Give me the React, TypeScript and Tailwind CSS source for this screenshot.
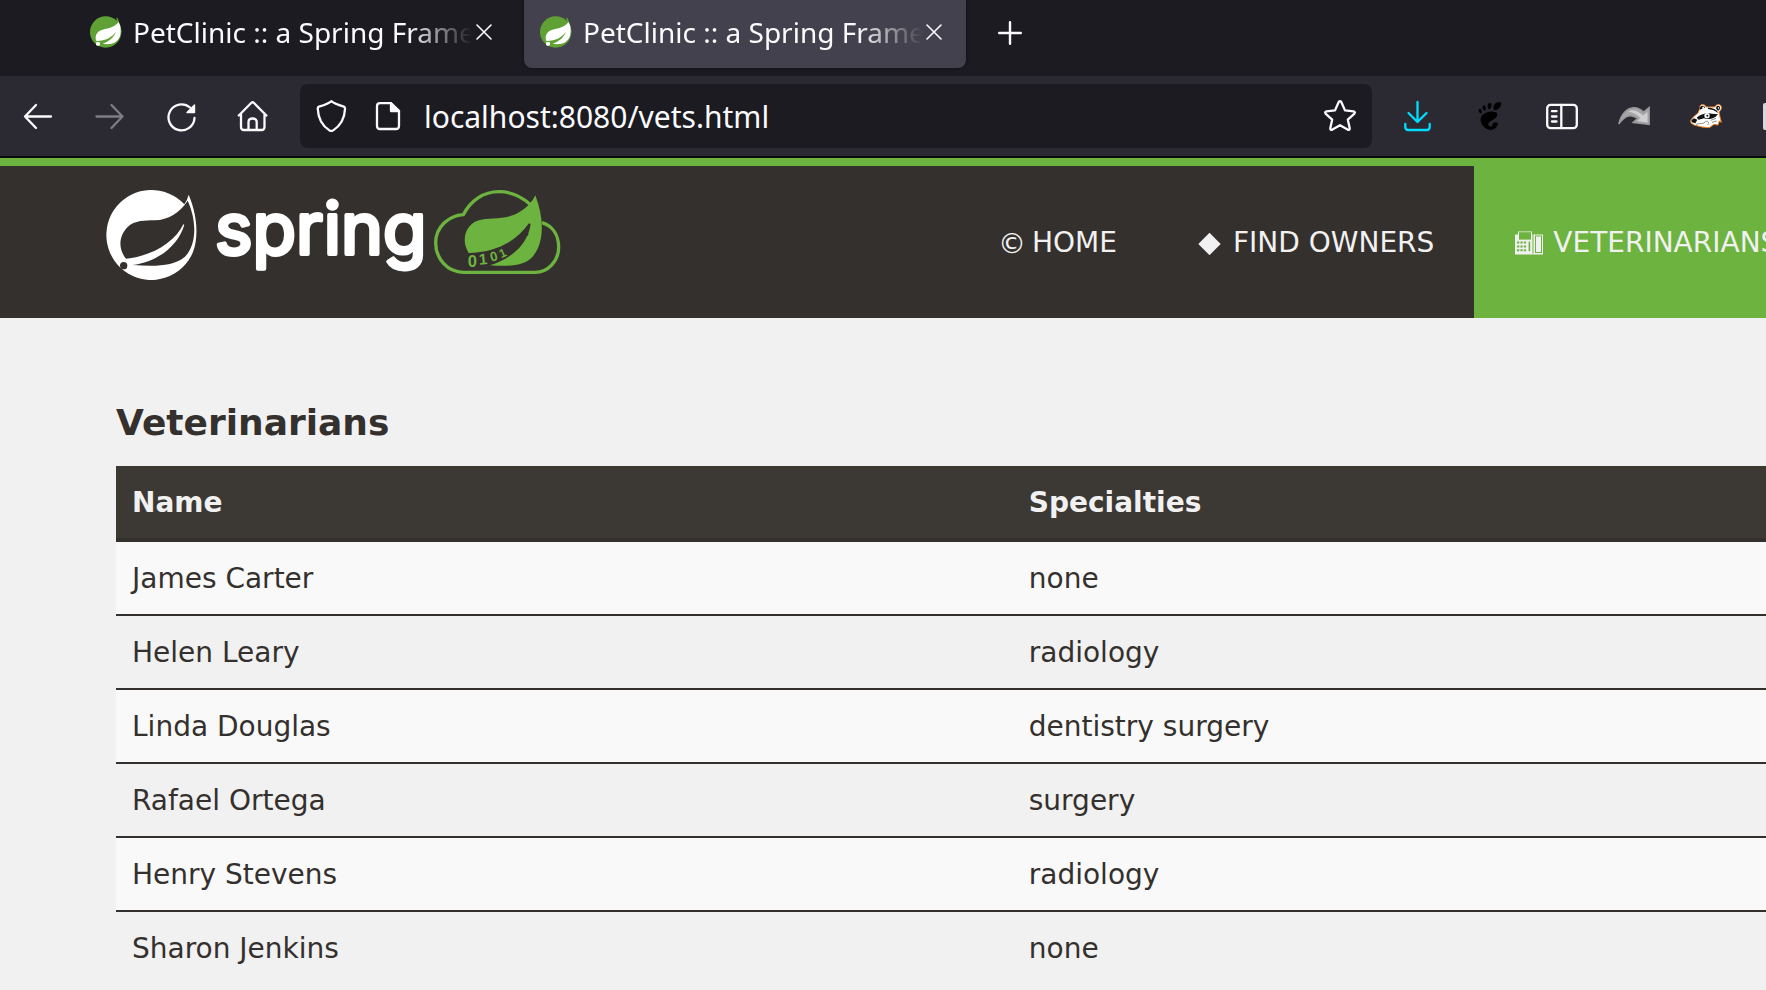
import type { ReactNode } from 'react';
import { SiGnome } from 'react-icons/si';

function SpringFavicon() {
  return (
    <svg viewBox="0 0 96 96" className="size-8 shrink-0" aria-hidden="true">
      <circle cx="47" cy="48" r="47" fill="#5fa134" />
      <path d="M80 4 Q86 8 86 16 Q94 30 95 50 L78 40 Z" fill="#5fa134" />
      <path
        d="M86 18 C70 40 42 36 27 46 C15 55 16 68 19 75 C48 74 66 64 78 47 C70 68 52 78 38 83 C62 88 86 80 91 56 C94 40 91 28 86 18 Z"
        fill="#fff"
      />
      <rect x="18" y="78" width="12" height="11" rx="4" fill="#fff" />
    </svg>
  );
}

function Line({ children, className }: { children: ReactNode; className: string }) {
  return (
    <svg
      viewBox="0 0 32 32"
      fill="none"
      stroke="currentColor"
      strokeWidth="2.3"
      strokeLinecap="round"
      strokeLinejoin="round"
      className={className}
      aria-hidden="true"
    >
      {children}
    </svg>
  );
}

function Tab({ active, title }: { active?: boolean; title: string }) {
  return (
    <div
      className={
        active
          ? 'flex h-[68px] w-[442px] shrink-0 items-center rounded-b-lg bg-[#42414d] pr-6 pl-4 pb-1 shadow-[0_0_4px_rgba(0,0,0,0.5)]'
          : 'flex h-[68px] w-[442px] shrink-0 items-center pr-6 pl-4 pb-1'
      }
    >
      <SpringFavicon />
      <button
        type="button"
        className="ml-[11px] min-w-0 flex-1 overflow-hidden text-left text-[28px] leading-[40px] whitespace-nowrap [mask-image:linear-gradient(to_right,#000_calc(100%-64px),transparent)]"
      >
        {title}
      </button>
      <button type="button" aria-label="Close tab" className="ml-1 size-4">
        <svg viewBox="0 0 16 16" className="size-4" stroke="#fbfbfe" strokeWidth="1.6" strokeLinecap="round">
          <path d="M1 1 L15 15 M15 1 L1 15" />
        </svg>
      </button>
    </div>
  );
}

function ToolButton({ label, children }: { label: string; children: ReactNode }) {
  return (
    <button type="button" aria-label={label} className="block size-8 shrink-0">
      {children}
    </button>
  );
}

function Badger() {
  return (
    <svg viewBox="0 0 96 78" className="size-8" aria-hidden="true">
      <path
        d="M2 52 L10 42 L24 30 L30 16 C28 6 36 2 43 6 L50 12 L74 12 C80 2 92 2 94 12 C95 20 90 24 87 27 L90 42 L94 58 L88 54 L84 66 L72 64 L58 74 L36 72 L12 66 L3 60 Z"
        fill="#fff"
        stroke="#ee8122"
        strokeWidth="3"
        strokeLinejoin="round"
      />
      <path d="M30 20 C28 8 40 4 46 14 L38 16 Z M78 16 C80 4 92 8 90 18 L84 24 Z" fill="#111" />
      <path d="M36 16 C38 9 42 10 43 14 Z M83 16 C85 9 89 12 87 18 Z" fill="#fff" />
      <path d="M54 14 C66 14 82 18 84 30 C74 22 64 19 54 18 Z" fill="#111" />
      <path d="M4 52 L12 46 L22 50 L16 61 L6 58 Z M20 44 C32 32 52 28 66 32 L84 34 L76 42 C68 48 50 50 42 46 L26 50 Z" fill="#111" />
      <circle cx="51" cy="38" r="8" fill="#fff" />
      <circle cx="52" cy="38" r="3" fill="#111" />
      <path d="M18 64 C30 60 40 64 46 56 C54 52 60 60 52 66 M62 52 L78 46 M66 58 L80 54" fill="none" stroke="#777" strokeWidth="2.5" />
    </svg>
  );
}

function BrowserChrome() {
  return (
    <header className="text-[#fbfbfe] [font-family:'Noto_Sans','Open_Sans',sans-serif]">
      <div className="flex h-[76px] gap-2 bg-[#1c1b22] pl-[74px]">
        <Tab title="PetClinic :: a Spring Frame" />
        <Tab active title="PetClinic :: a Spring Frame" />
        <button type="button" aria-label="New tab" className="ml-5 flex h-[66px] w-8 shrink-0 items-center justify-center">
          <svg viewBox="0 0 24 24" className="size-6" stroke="currentColor" strokeWidth="2.4" strokeLinecap="round">
            <path d="M12 1.2 V22.8 M1.2 12 H22.8" />
          </svg>
        </button>
      </div>

      <div className="flex h-[82px] items-center border-b-2 border-[#0c0c0d] bg-[#2b2a33] pl-[21px]">
        <div className="flex gap-10">
          <ToolButton label="Back">
            <Line className="size-8">
              <path d="M4 16.5 H30 M15 5 L4 16.5 L15 28" />
            </Line>
          </ToolButton>
          <ToolButton label="Forward">
            <Line className="size-8 text-[#7d7c83]">
              <path d="M3.5 16.5 H29.5 M18.5 5 L29.5 16.5 L18.5 28" />
            </Line>
          </ToolButton>
          <ToolButton label="Reload">
            <Line className="size-8">
              <path d="M29.5 18 A13 13 0 1 1 25 7.5" />
              <path d="M29.5 5 V12.5 H22 Z" fill="currentColor" strokeWidth="1.4" />
            </Line>
          </ToolButton>
          <ToolButton label="Home">
            <Line className="size-8">
              <path d="M1.8 15.5 L14.4 2.8 Q15.6 1.8 16.8 2.8 L29.4 15.5 M4 13.5 V27 Q4 30 7 30 H24.5 Q27.5 30 27.5 27 V13.5 M11.5 30 V22 Q11.5 18.5 15.6 18.5 Q19.7 18.5 19.7 22 V30" />
            </Line>
          </ToolButton>
        </div>

        <div className="ml-[31px] flex h-16 min-w-0 flex-1 items-center rounded-lg bg-[#1c1b22] px-4">
          <div className="flex gap-6">
            <ToolButton label="Tracking protection">
              <Line className="size-8">
                <path d="M15.3 1.2 Q13 3.5 3 6.7 Q1.6 7.2 1.8 9 C2.2 19 6 25.5 13.4 30.4 Q15.3 31.6 17.2 30.4 C24.6 25.5 28.6 19 29 9 Q29.2 7.2 27.8 6.7 Q18 3.5 15.3 1.2 Z" />
              </Line>
            </ToolButton>
            <ToolButton label="Site information">
              <Line className="size-8">
                <path d="M19 3.2 H8 Q5 3.2 5 6.2 V26 Q5 29 8 29 H24 Q27 29 27 26 V11 L19 3.2 Z" />
                <path d="M19 3.2 V11 H27 Z" fill="currentColor" />
              </Line>
            </ToolButton>
          </div>
          <input
            type="text"
            aria-label="Address"
            defaultValue="localhost:8080/vets.html"
            className="ml-5 min-w-0 flex-1 bg-transparent pt-0.5 text-[30px] leading-[40px] outline-none"
          />
          <ToolButton label="Bookmark this page">
            <Line className="size-8">
              <path d="M14.6 2.2 Q16 0.2 17.4 2.2 L21 10.4 L29.6 11.4 Q31.8 11.9 30.2 13.8 L23.8 19.6 L25.7 28.2 Q25.9 30.7 23.6 29.6 L16 25.2 L8.4 29.6 Q6.1 30.7 6.3 28.2 L8.2 19.6 L1.8 13.8 Q0.2 11.9 2.4 11.4 L11 10.4 Z" />
            </Line>
          </ToolButton>
        </div>

        <div className="flex w-[394px] shrink-0 gap-10 overflow-hidden pl-[30px]">
          <ToolButton label="Downloads">
            <Line className="size-8 text-[#00ddff]">
              <path d="M15.5 2 V22 M6.5 13 L15.5 22 L24.5 13 M3.3 24 V27 Q3.3 30 6.3 30 H24.7 Q27.7 30 27.7 27 V24" />
            </Line>
          </ToolButton>
          <ToolButton label="GNOME Shell integration">
            <SiGnome className="mx-auto size-7 text-black" />
          </ToolButton>
          <ToolButton label="Sidebars">
            <Line className="size-8">
              <rect x="1.2" y="4.8" width="29.6" height="23.4" rx="3.5" />
              <path d="M15.3 5 V28 M6 11.2 H10.5 M6 16.5 H10.5 M6 21.5 H10.5" />
            </Line>
          </ToolButton>
          <ToolButton label="Redirect">
            <svg viewBox="0 0 32 32" className="size-8" aria-hidden="true">
              <path
                d="M0.8 24 C3 14 9 8 15.5 7.7 C20 7.5 23 9.5 25.5 12 L31.2 7.5 V24.5 L15 22.5 L19.5 18.5 C12 12.5 6 17 0.8 24 Z"
                fill="#a6a6a8"
                stroke="#98989b"
                strokeWidth="1.4"
              />
              <path d="M10 11.5 C16 8 21 12 25 15.5 L29.5 12 V22.5 L19 21 L22.5 18 C18 14 15 12 10 11.5 Z" fill="#cfcfd1" />
            </svg>
          </ToolButton>
          <ToolButton label="Privacy Badger">
            <Badger />
          </ToolButton>
          <ToolButton label="Extension">
            <svg viewBox="0 0 32 32" className="size-8" aria-hidden="true">
              <rect x="1" y="3" width="29" height="27" rx="2" fill="#d7d7db" />
            </svg>
          </ToolButton>
        </div>
      </div>
    </header>
  );
}

function SpringLogo() {
  return (
    <svg viewBox="100 184 466 104" className="h-[104px] w-[466px]" role="img" aria-label="Spring">
      <g transform="translate(90 170) scale(0.3333)">
        <path
          d="M283 103 A135 135 0 1 0 309 246 C325 205 324 140 296 74 Q292 90 283 103 Z"
          fill="#fff"
        />
        <path
          d="M293 92 C268 130 235 149 195 151 C165 152 135 150 112 172 C84 202 86 240 108 266 C190 258 255 215 280 163 L283 164 C265 228 200 277 128 285 C190 290 250 290 283 262 C322 225 320 150 293 92 Z"
          fill="#34302d"
        />
        <circle cx="101" cy="287" r="11" fill="#34302d" />
      </g>
      <text
        x="215"
        y="254"
        fill="#fff"
        stroke="#fff"
        strokeWidth="4"
        strokeLinejoin="round"
        fontSize="71"
        fontFamily="Inter, 'Liberation Sans', sans-serif"
      >
        spring
      </text>
      <g transform="translate(330 170) scale(0.3333)" fill="#6db33f">
        <path
          d="M600 103 C575 80 545 65 507 65 C460 65 422 92 400 134 C355 137 317 172 317 218 C317 266 352 306 400 307 H615 C655 307 686 272 686 232 C686 195 668 168 636 158"
          fill="none"
          stroke="#6db33f"
          strokeWidth="10"
        />
        <path d="M616 76 C605 98 590 115 562 130 C520 152 480 140 442 152 C408 166 400 200 406 225 Q410 240 416 249 C490 247 555 220 597 160 L602 162 C594 225 540 268 480 286 C530 290 580 288 605 263 C642 225 645 150 616 76 Z" />
        <g fontFamily="'Liberation Sans', Arial, sans-serif" fontWeight="700">
          <text x="413" y="290" fontSize="50">0</text>
          <text x="448" y="284" fontSize="46" transform="rotate(-5 448 284)">1</text>
          <text x="484" y="275" fontSize="40" transform="rotate(-14 484 275)">0</text>
          <text x="514" y="265" fontSize="36" transform="rotate(-24 514 265)">1</text>
        </g>
        <g fill="none" stroke="#34302d" strokeWidth="4">
          <path d="M536 224 L548 246" />
          <ellipse cx="560" cy="225" rx="5" ry="9" transform="rotate(-35 560 225)" />
          <ellipse cx="574" cy="208" rx="5" ry="8" transform="rotate(-42 574 208)" />
          <ellipse cx="587" cy="190" rx="4" ry="7" transform="rotate(-50 587 190)" />
        </g>
      </g>
    </svg>
  );
}

function FaxIcon() {
  return (
    <svg viewBox="0 0 28 24" className="h-6 w-7" fill="#f1f1f1" aria-hidden="true">
      <path d="M0 3.5 H3 V0.5 H17 V3.5 H28 V23.5 H0 Z" />
      <path d="M4 1.2 H16 V8.6 H4 Z" fill="#6db33f" />
      <path d="M2 10.5 h2.3v2h-2.3z M5.4 10.5 h2.3v2h-2.3z M8.8 10.5 h2.3v2h-2.3z M2 14.5 h2.3v2h-2.3z M5.4 14.5 h2.3v2h-2.3z M8.8 14.5 h2.3v2h-2.3z M2 18.3 h2.3v2h-2.3z M5.4 18.3 h2.3v2h-2.3z M8.8 18.3 h2.3v2h-2.3z M13.6 10.5 h1.6v9.8h-1.6z M17.5 3.5 h1v19h-1z" fill="#6db33f" />
      <rect x="20.5" y="5" width="6" height="16.5" fill="none" stroke="#6db33f" strokeWidth="1" />
    </svg>
  );
}

function SiteHeader() {
  return (
    <div className="flex h-40 items-stretch justify-between overflow-hidden border-t-8 border-[#6db33f] bg-[#34302d]">
      <a href="#home" className="mt-[18px] ml-[100px] shrink-0 self-start">
        <SpringLogo />
      </a>
      <nav className="w-[808px] shrink-0 overflow-hidden">
        <ul className="flex h-full text-[28px] leading-[40px] whitespace-nowrap text-[#f1f1f1]">
          <li className="flex shrink-0">
            <a href="#home" className="flex items-center px-10 pt-0.5">
              <span className="w-[34px] pt-0.5">©</span>
              HOME
            </a>
          </li>
          <li className="flex shrink-0">
            <a href="#owners" className="flex items-center px-10 pt-0.5">
              <svg viewBox="0 0 24 24" className="mr-3 size-6" fill="currentColor" aria-hidden="true">
                <path d="M12.5 1.8 L23.7 13 L12.5 24.2 L1.3 13 Z" />
              </svg>
              FIND OWNERS
            </a>
          </li>
          <li className="flex shrink-0 bg-[#6db33f]">
            <a href="#vets" className="flex items-center gap-[10px] pr-10 pl-[41px] pt-0.5">
              <FaxIcon />
              VETERINARIANS
            </a>
          </li>
        </ul>
      </nav>
    </div>
  );
}

const vets = [
  { name: 'James Carter', specialties: 'none' },
  { name: 'Helen Leary', specialties: 'radiology' },
  { name: 'Linda Douglas', specialties: 'dentistry surgery' },
  { name: 'Rafael Ortega', specialties: 'surgery' },
  { name: 'Henry Stevens', specialties: 'radiology' },
  { name: 'Sharon Jenkins', specialties: 'none' },
];

export default function App() {
  return (
    <div className="min-h-screen bg-[#f1f1f1]">
      <BrowserChrome />
      <div className="text-[#34302d] [font-family:'DejaVu_Sans',Verdana,sans-serif]">
        <SiteHeader />
        <main className="pt-[85px] pl-[116px]">
          <h2 className="text-[36px] leading-[40px] font-bold">Veterinarians</h2>
          <table className="mt-[23px] w-full table-fixed border-separate border-spacing-0 text-left text-[28px] leading-[40px]">
            <thead>
              <tr className="bg-[#3c3834] text-[#f1f1f1]">
                <th scope="col" className="w-[54.35%] border-b-4 border-[#34302d] px-4 pt-[17px] pb-[15px] font-bold">
                  Name
                </th>
                <th scope="col" className="border-b-4 border-[#34302d] px-4 pt-[17px] pb-[15px] font-bold">
                  Specialties
                </th>
              </tr>
            </thead>
            <tbody>
              {vets.map((vet) => (
                <tr key={vet.name} className="group odd:bg-[#f9f9f9]">
                  <td className="border-b-2 border-[#34302d] px-4 pt-[17px] pb-[15px] group-last:border-b-0">{vet.name}</td>
                  <td className="border-b-2 border-[#34302d] px-4 pt-[17px] pb-[15px] group-last:border-b-0">
                    {vet.specialties}
                  </td>
                </tr>
              ))}
            </tbody>
          </table>
        </main>
      </div>
    </div>
  );
}
